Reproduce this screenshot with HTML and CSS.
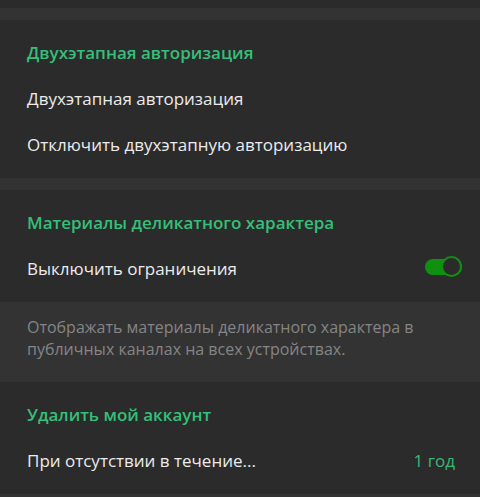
FILE: index.html
```html
<!DOCTYPE html>
<html lang="ru">
<head>
  <meta charset="UTF-8" />
  <title>Конфиденциальность</title>
  <link rel="stylesheet" href="styles.css">
</head>
<body>

  <div class="section section-cut"></div>

  <div class="section">
    <div class="section-title">Двухэтапная авторизация</div>
    <div class="row">Двухэтапная авторизация</div>
    <div class="row">Отключить двухэтапную авторизацию</div>
  </div>

  <div class="section">
    <div class="section-title">Материалы деликатного характера</div>
    <div class="row">
      <span>Выключить ограничения</span>
      <span class="toggle"><span class="knob"></span></span>
    </div>
  </div>

  <div class="about">
    Отображать материалы деликатного характера в<br>
    публичных каналах на всех устройствах.
  </div>

  <div class="section">
    <div class="section-title">Удалить мой аккаунт</div>
    <div class="row">
      <span>При отсутствии в течение...</span>
      <span class="value">1 год</span>
    </div>
  </div>

</body>
</html>
```

FILE: styles.css
```css
body {
  margin: 0;
  background-color: #333333;
  font-family: 'Open Sans', sans-serif;
  font-size: 17px;
  color: #ececec;
  height: 497px;
  overflow: hidden;
}

.section {
  background-color: #2b2b2b;
  padding-bottom: 10px;
  margin-bottom: 12px;
}

.section-cut {
  height: 8px;
  padding: 0;
}

.section-title {
  color: #35bf78;
  font-weight: 600;
  line-height: 24px;
  padding: 21px 27px 10px;
}

.row {
  display: flex;
  align-items: center;
  justify-content: space-between;
  height: 46px;
  padding: 0 18px 0 27px;
}

.row:last-child {
  margin-bottom: 1px;
}

.value {
  color: #35b875;
  padding-right: 7px;
}

.toggle {
  position: relative;
  width: 37px;
  height: 16px;
  margin-top: -2px;
  border-radius: 8px;
  background-color: #109010;
}

.knob {
  position: absolute;
  right: 0;
  top: -3px;
  width: 17px;
  height: 17px;
  border: 2px solid #109010;
  border-radius: 50%;
  background-color: #2b2b2b;
}

.about {
  color: #858585;
  font-size: 16px;
  line-height: 22px;
  padding: 14px 27px 22px;
  margin-top: -12px;
}
```
